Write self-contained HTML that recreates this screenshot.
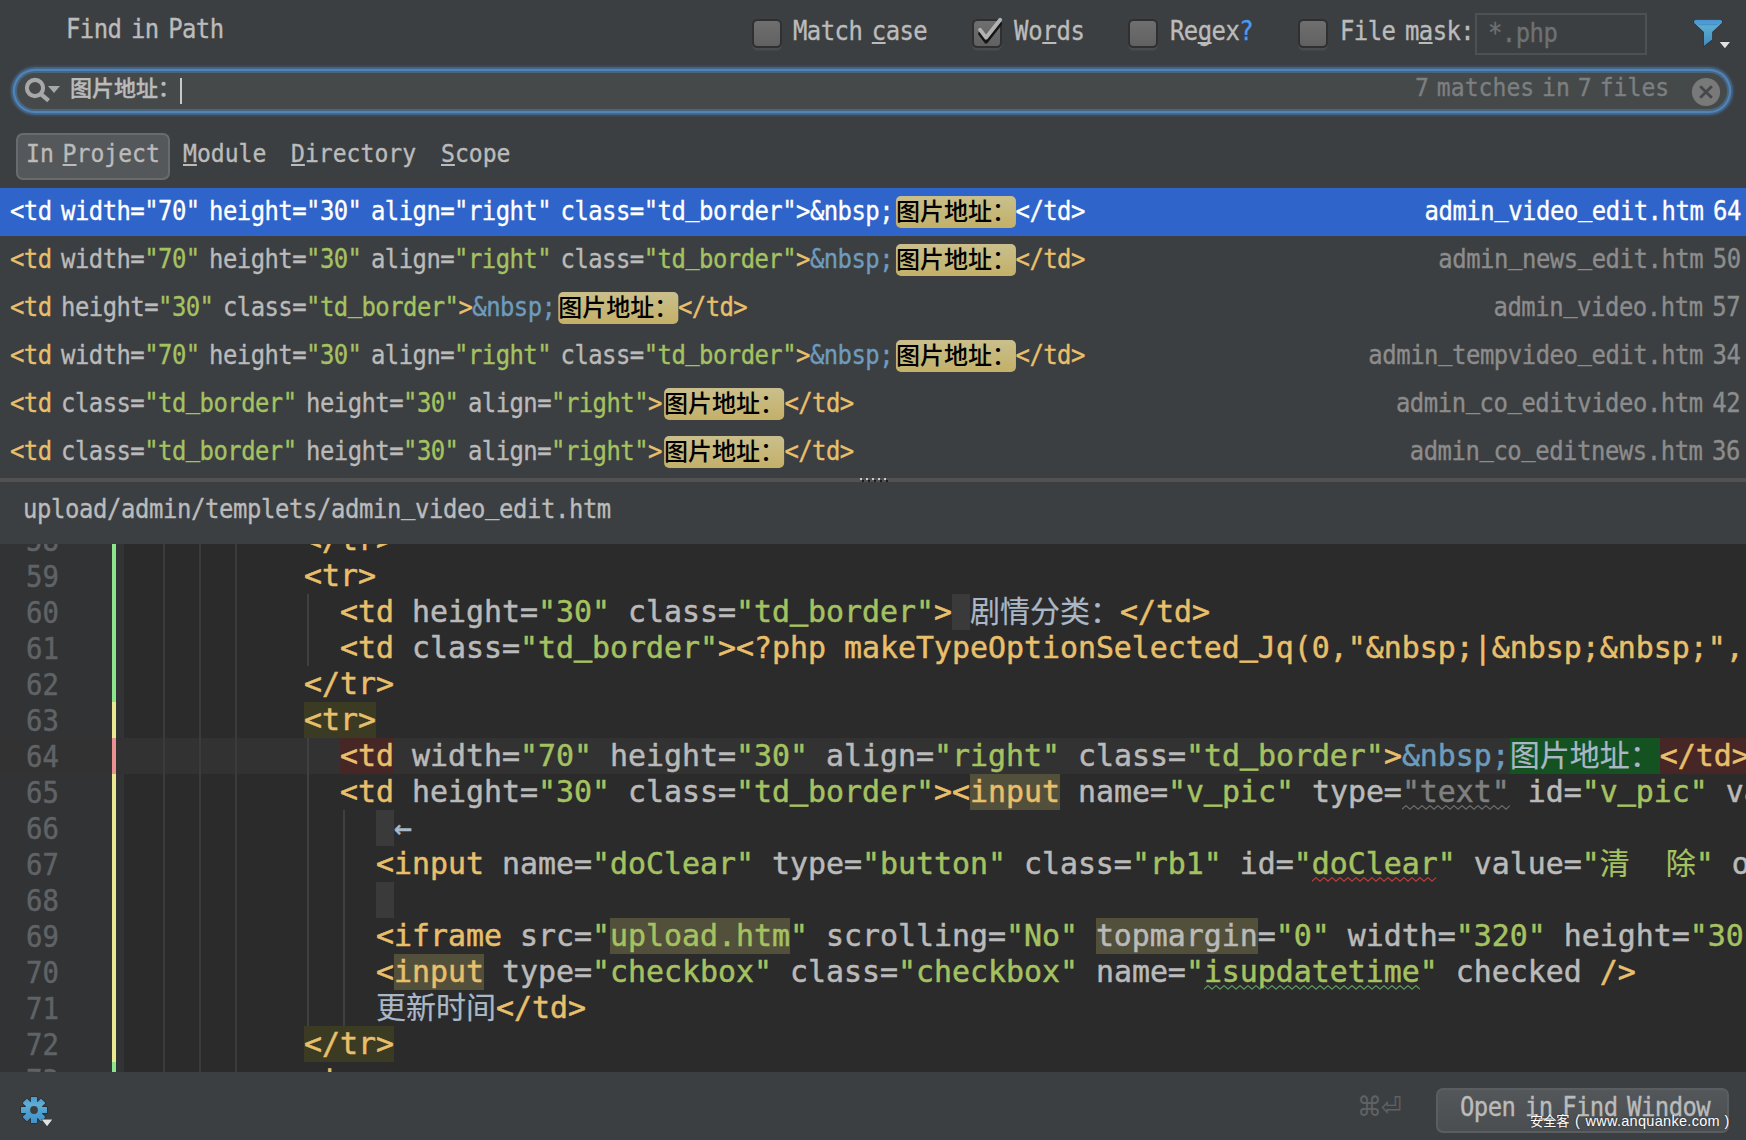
<!DOCTYPE html>
<html lang="zh">
<head>
<meta charset="utf-8">
<title>Find in Path</title>
<style>
html,body{margin:0;padding:0;}
body{width:1746px;height:1140px;overflow:hidden;position:relative;background:#3c3f41;
 font-family:"DejaVu Sans Mono","Liberation Mono","Noto Sans CJK SC",monospace;color:#bbbbbb;}
.abs{position:absolute;}
/* UI font */
.ui{position:absolute;white-space:pre;font-size:26px;letter-spacing:-0.6px;word-spacing:-4.7px;height:48px;line-height:48px;color:#bbbbbb;transform:scaleX(.92);transform-origin:0 0;-webkit-text-stroke:0.35px;}
.sm{font-size:24px;letter-spacing:0;word-spacing:-5.3px;transform:scaleX(.962);}
.cj{letter-spacing:0;word-spacing:0;font-family:"Liberation Sans","Noto Sans CJK SC",sans-serif;}
u{text-decoration:underline;text-decoration-thickness:2px;text-underline-offset:2px;text-decoration-skip-ink:none;}
/* checkboxes */
.cb{position:absolute;top:19px;width:25.5px;height:24.5px;border:2px solid #2e3032;border-radius:5.5px;
 background:linear-gradient(#6f6f6f,#616161);box-shadow:0 2.5px 0 0 #494c4e;}
/* search field */
#sf{position:absolute;left:17.4px;top:73px;width:1710px;height:36px;border-radius:18px;background:#45494a;
 box-shadow:0 0 0 2px #48657f,0 0 0 4.2px #4f84ba,0 0 0 6px #45607d,0 0 2px 7.2px rgba(62,84,110,.7);}
/* list */
.row{position:absolute;left:0;width:1746px;height:48px;}
.row .l{left:9.6px;top:-1.1px;}
.row .r{right:5.5px;top:-1.1px;color:#8c8c8c;transform-origin:100% 0;letter-spacing:-0.5px;}
.tg{color:#e8bf6a}.at{color:#bababa}.st{color:#a5c261}.en{color:#6d9cbe}
.hl{display:inline-block;width:130.43px;height:32px;line-height:32px;vertical-align:baseline;letter-spacing:0;word-spacing:0;-webkit-text-stroke:0;}
.hi{display:block;position:relative;top:0px;width:120px;height:32px;line-height:32px;transform:scaleX(1.08696);transform-origin:0 0;font-size:24px;color:#000;
 font-family:"Liberation Sans","Noto Sans CJK SC",sans-serif;font-weight:500;}
.hi::before{content:"";position:absolute;left:0;top:0.2px;width:120px;height:32.3px;border-radius:5px;background:linear-gradient(#cabf8c,#c3b068);z-index:-1;}
.us{font-style:normal;position:relative;top:-4px;}
.sel{background:#2f65ca;}
.sel .ui,.sel .ui span{color:#fff;}
.sel .ui span.hi{color:#000;}
/* editor */
#ed{position:absolute;left:0;top:544px;width:1746px;height:528px;background:#2b2b2b;overflow:hidden;}
#gut{position:absolute;left:0;top:0;width:124px;height:528px;background:#313335;}
.ln{position:absolute;left:26px;height:36px;line-height:36px;font-size:30.5px;color:#606366;white-space:pre;transform:scaleX(.895);transform-origin:0 0;-webkit-text-stroke:0.5px;margin-top:.7px;}
.cl{position:absolute;height:36px;line-height:36px;font-size:29.9px;white-space:pre;color:#a9b7c6;-webkit-text-stroke:0.5px;}
.g{position:absolute;width:2px;background:#3b3b3b;}
.cjk{font-family:"Liberation Mono","Noto Sans CJK SC",monospace;font-size:30px;line-height:0;-webkit-text-stroke:0.2px;}
.u2{position:relative;top:-3px;-webkit-text-stroke:.95px;}
.wg{color:#808080;}
.wr{color:#a5c261;}
.wn{color:#a5c261;}
</style>
</head>
<body>

<!-- title + options -->
<div class="ui" style="left:66px;top:5px;">Find in Path</div>

<div class="cb" style="left:752px;"></div>
<div class="ui" style="left:793px;top:7px;">Match <u>c</u>ase</div>
<div class="cb" style="left:972px;"></div>
<svg class="abs" style="left:972px;top:14px" width="34" height="34" viewBox="0 0 34 34"><path d="M8 19.7 L14 27.7 L28.2 9.7" fill="none" stroke="#151515" stroke-width="3.8" stroke-linecap="round" stroke-linejoin="round"/><path d="M8 15.7 L14 23.7 L28.2 5.7" fill="none" stroke="#b2b2b2" stroke-width="3.8" stroke-linecap="round" stroke-linejoin="round"/></svg>
<div class="ui" style="left:1014px;top:7px;letter-spacing:-0.3px;">Wo<u>r</u>ds</div>
<div class="cb" style="left:1128px;"></div>
<div class="ui" style="left:1170px;top:7px;">Re<u>g</u>ex<span style="color:#4a9bf0">?</span></div>
<div class="cb" style="left:1298px;"></div>
<div class="ui" style="left:1340px;top:7px;">File m<u>a</u>sk:</div>
<div class="abs" style="left:1475px;top:13px;width:168px;height:38px;border:2px solid #4e5052;background:#3c3f41;"></div>
<div class="ui" style="left:1488px;top:9.1px;color:#6e7173;">*.php</div>
<svg class="abs" style="left:1692px;top:18px" width="44" height="36" viewBox="0 0 44 36"><defs><linearGradient id="fg" x1="0" y1="0" x2="0" y2="1"><stop offset="0" stop-color="#4693d2"/><stop offset=".28" stop-color="#5cabd0"/><stop offset="1" stop-color="#3f8bc2"/></linearGradient></defs><path d="M4 1.8 H28.1 a2 2 0 0 1 2 2 c0 1 -.5 1.6 -1 2 L20.2 13.9 V21.6 L11.9 27.9 V13.9 L3 5.8 c-.5 -.4 -1 -1 -1 -2 a2 2 0 0 1 2 -2 Z" fill="url(#fg)" stroke="#2c2e30" stroke-width="1.2" paint-order="stroke"/><path d="M6.5 6.3 H25.7" stroke="#3f89bf" stroke-width="0.8"/><path d="M27.7 24 H38 L32.9 30.2 Z" fill="#e2e2e2" stroke="#2c2e30" stroke-width="1" paint-order="stroke"/></svg>

<!-- search field -->
<div id="sf"></div>
<svg class="abs" style="left:22px;top:74px" width="42" height="32" viewBox="0 0 42 32"><circle cx="13" cy="14" r="8.1" fill="none" stroke="#a8a8a8" stroke-width="4.1"/><path d="M18.6 19.8 L26.6 26.6" stroke="#a8a8a8" stroke-width="4.2"/><path d="M26 12 H38 L32 19 Z" fill="#a8a8a8"/></svg>
<div class="ui cj" style="left:70px;top:64.7px;font-size:22px;transform:none;font-weight:500;">图片地址：</div>
<div class="abs" style="left:180px;top:78px;width:2px;height:26px;background:#c8c8c8;"></div>
<div class="ui sm" style="right:77px;top:63.6px;color:#7c7f81;transform-origin:100% 0;word-spacing:-6.2px;">7 matches in 7 files</div>
<svg class="abs" style="left:1691px;top:77px" width="30" height="30" viewBox="0 0 30 30"><circle cx="15" cy="15" r="14.1" fill="#797979"/><path d="M9.2 9.2 L20.8 20.8 M20.8 9.2 L9.2 20.8" stroke="#44484a" stroke-width="2.8"/></svg>

<!-- scope tabs -->
<div class="abs" style="left:16px;top:133px;width:150px;height:43px;border:2px solid #696c6e;border-radius:7px;background:#54585a;"></div>
<div class="ui sm" style="left:25.8px;top:129.7px;">In <u>P</u>roject</div>
<div class="ui sm" style="left:183px;top:129.7px;"><u>M</u>odule</div>
<div class="ui sm" style="left:291px;top:129.7px;"><u>D</u>irectory</div>
<div class="ui sm" style="left:441px;top:129.7px;"><u>S</u>cope</div>

<!-- result list -->
<div class="row sel" style="top:188px;"><div class="ui l"><span class="tg">&lt;td</span> <span class="at">width=</span><span class="st">"70"</span> <span class="at">height=</span><span class="st">"30"</span> <span class="at">align=</span><span class="st">"right"</span> <span class="at">class=</span><span class="st">"td<i class="us">_</i>border"</span><span class="tg">&gt;</span><span class="en">&amp;nbsp;</span><span style="display:inline-block;width:2.8px"></span><span class="hl"><span class="hi">图片地址：</span></span><span class="tg">&lt;/td&gt;</span></div><div class="ui r">admin<i class="us">_</i>video<i class="us">_</i>edit.htm 64</div></div>
<div class="row" style="top:236px;"><div class="ui l"><span class="tg">&lt;td</span> <span class="at">width=</span><span class="st">"70"</span> <span class="at">height=</span><span class="st">"30"</span> <span class="at">align=</span><span class="st">"right"</span> <span class="at">class=</span><span class="st">"td<i class="us">_</i>border"</span><span class="tg">&gt;</span><span class="en">&amp;nbsp;</span><span style="display:inline-block;width:2.8px"></span><span class="hl"><span class="hi">图片地址：</span></span><span class="tg">&lt;/td&gt;</span></div><div class="ui r">admin<i class="us">_</i>news<i class="us">_</i>edit.htm 50</div></div>
<div class="row" style="top:284px;"><div class="ui l"><span class="tg">&lt;td</span> <span class="at">height=</span><span class="st">"30"</span> <span class="at">class=</span><span class="st">"td<i class="us">_</i>border"</span><span class="tg">&gt;</span><span class="en">&amp;nbsp;</span><span style="display:inline-block;width:2.8px"></span><span class="hl"><span class="hi">图片地址：</span></span><span class="tg">&lt;/td&gt;</span></div><div class="ui r">admin<i class="us">_</i>video.htm 57</div></div>
<div class="row" style="top:332px;"><div class="ui l"><span class="tg">&lt;td</span> <span class="at">width=</span><span class="st">"70"</span> <span class="at">height=</span><span class="st">"30"</span> <span class="at">align=</span><span class="st">"right"</span> <span class="at">class=</span><span class="st">"td<i class="us">_</i>border"</span><span class="tg">&gt;</span><span class="en">&amp;nbsp;</span><span style="display:inline-block;width:2.8px"></span><span class="hl"><span class="hi">图片地址：</span></span><span class="tg">&lt;/td&gt;</span></div><div class="ui r">admin<i class="us">_</i>tempvideo<i class="us">_</i>edit.htm 34</div></div>
<div class="row" style="top:380px;"><div class="ui l"><span class="tg">&lt;td</span> <span class="at">class=</span><span class="st">"td<i class="us">_</i>border"</span> <span class="at">height=</span><span class="st">"30"</span> <span class="at">align=</span><span class="st">"right"</span><span class="tg">&gt;</span><span style="display:inline-block;width:2.8px"></span><span class="hl"><span class="hi">图片地址：</span></span><span class="tg">&lt;/td&gt;</span></div><div class="ui r">admin<i class="us">_</i>co<i class="us">_</i>editvideo.htm 42</div></div>
<div class="row" style="top:428px;"><div class="ui l"><span class="tg">&lt;td</span> <span class="at">class=</span><span class="st">"td<i class="us">_</i>border"</span> <span class="at">height=</span><span class="st">"30"</span> <span class="at">align=</span><span class="st">"right"</span><span class="tg">&gt;</span><span style="display:inline-block;width:2.8px"></span><span class="hl"><span class="hi">图片地址：</span></span><span class="tg">&lt;/td&gt;</span></div><div class="ui r">admin<i class="us">_</i>co<i class="us">_</i>editnews.htm 36</div></div>

<!-- splitter + path -->
<div class="abs" style="left:0;top:478px;width:1746px;height:4px;background:#525252;"></div>
<svg class="abs" style="left:860px;top:478px" width="30" height="4" viewBox="0 0 30 4" shape-rendering="crispEdges"><rect x="0" y="0" width="2" height="2" fill="#c9c9c9"/><rect x="2" y="2" width="2" height="2" fill="#1b1b1b"/><rect x="6" y="0" width="2" height="2" fill="#c9c9c9"/><rect x="8" y="2" width="2" height="2" fill="#1b1b1b"/><rect x="12" y="0" width="2" height="2" fill="#c9c9c9"/><rect x="14" y="2" width="2" height="2" fill="#1b1b1b"/><rect x="18" y="0" width="2" height="2" fill="#c9c9c9"/><rect x="20" y="2" width="2" height="2" fill="#1b1b1b"/><rect x="24" y="0" width="2" height="2" fill="#c9c9c9"/><rect x="26" y="2" width="2" height="2" fill="#1b1b1b"/></svg>
<div class="ui" style="left:23px;top:485px;letter-spacing:-0.44px;">upload/admin/templets/admin<i class="us">_</i>video<i class="us">_</i>edit.htm</div>

<!-- editor -->
<div id="ed">
<div id="gut"></div>
<div class="abs" style="left:124px;top:194px;width:1622px;height:36px;background:#323232;"></div>
<div class="abs" style="left:0;top:194px;width:124px;height:36px;background:#323232;"></div>
<div class="abs" style="left:112px;top:0px;width:4px;height:158px;background:#8ce48c;"></div>
<div class="abs" style="left:112px;top:158px;width:4px;height:36px;background:#ebe98f;"></div>
<div class="abs" style="left:112px;top:194px;width:4px;height:36px;background:#ea9192;"></div>
<div class="abs" style="left:112px;top:230px;width:4px;height:288px;background:#ebe98f;"></div>
<div class="abs" style="left:112px;top:518px;width:4px;height:10px;background:#8ce48c;"></div>
<div class="g" style="left:163px;top:0;height:528px;"></div>
<div class="g" style="left:199px;top:0;height:528px;"></div>
<div class="g" style="left:235px;top:0;height:528px;"></div>
<div class="g" style="left:307px;top:50px;height:72px;background:#404040;"></div>
<div class="g" style="left:307px;top:194px;height:288px;background:#404040;"></div>
<div class="g" style="left:343px;top:266px;height:216px;background:#404040;"></div>
<div class="ln" style="top:-22px;">58</div>
<div class="ln" style="top:14px;">59</div>
<div class="ln" style="top:50px;">60</div>
<div class="ln" style="top:86px;">61</div>
<div class="ln" style="top:122px;">62</div>
<div class="ln" style="top:158px;">63</div>
<div class="ln" style="top:194px;">64</div>
<div class="ln" style="top:230px;">65</div>
<div class="ln" style="top:266px;">66</div>
<div class="ln" style="top:302px;">67</div>
<div class="ln" style="top:338px;">68</div>
<div class="ln" style="top:374px;">69</div>
<div class="ln" style="top:410px;">70</div>
<div class="ln" style="top:446px;">71</div>
<div class="ln" style="top:482px;">72</div>
<div class="ln" style="top:518px;">73</div>
<div class="ln" style="top:554px;">74</div>
<div class="abs" style="left:304px;top:158px;width:72px;height:36px;background:#3b3b24;"></div>
<div class="abs" style="left:304px;top:482px;width:90px;height:36px;background:#3b3b24;"></div>
<div class="abs" style="left:340px;top:194px;width:54px;height:36px;background:#472626;"></div>
<div class="abs" style="left:1510px;top:194px;width:150.12px;height:36px;background:#155221;"></div>
<div class="abs" style="left:1660.1200000000001px;top:194px;width:108px;height:36px;background:#472626;"></div>
<div class="abs" style="left:952px;top:50px;width:18px;height:36px;background:#3a3a3a;"></div>
<div class="abs" style="left:376px;top:266px;width:18px;height:36px;background:#3a3a3a;"></div>
<div class="abs" style="left:376px;top:338px;width:18px;height:36px;background:#3a3a3a;"></div>
<div class="abs" style="left:970px;top:230px;width:90px;height:36px;background:#52503a;"></div>
<div class="abs" style="left:394px;top:410px;width:90px;height:36px;background:#52503a;"></div>
<div class="abs" style="left:610px;top:374px;width:180px;height:36px;background:#52503a;"></div>
<div class="abs" style="left:1096px;top:374px;width:162px;height:36px;background:#52503a;"></div>
<svg class="abs" style="left:1402px;top:261px" width="108" height="5" viewBox="0 0 108 5"><polyline points="0,4.2 4,0.6 8,4.2 12,0.6 16,4.2 20,0.6 24,4.2 28,0.6 32,4.2 36,0.6 40,4.2 44,0.6 48,4.2 52,0.6 56,4.2 60,0.6 64,4.2 68,0.6 72,4.2 76,0.6 80,4.2 84,0.6 88,4.2 92,0.6 96,4.2 100,0.6 104,4.2 108,0.6" fill="none" stroke="#6f6f6f" stroke-width="1.15"/></svg>
<svg class="abs" style="left:1312px;top:333px" width="126" height="5" viewBox="0 0 126 5"><polyline points="0,4.2 4,0.6 8,4.2 12,0.6 16,4.2 20,0.6 24,4.2 28,0.6 32,4.2 36,0.6 40,4.2 44,0.6 48,4.2 52,0.6 56,4.2 60,0.6 64,4.2 68,0.6 72,4.2 76,0.6 80,4.2 84,0.6 88,4.2 92,0.6 96,4.2 100,0.6 104,4.2 108,0.6 112,4.2 116,0.6 120,4.2 124,0.6" fill="none" stroke="#bc3f3c" stroke-width="1.15"/></svg>
<svg class="abs" style="left:1204px;top:441px" width="216" height="5" viewBox="0 0 216 5"><polyline points="0,4.2 4,0.6 8,4.2 12,0.6 16,4.2 20,0.6 24,4.2 28,0.6 32,4.2 36,0.6 40,4.2 44,0.6 48,4.2 52,0.6 56,4.2 60,0.6 64,4.2 68,0.6 72,4.2 76,0.6 80,4.2 84,0.6 88,4.2 92,0.6 96,4.2 100,0.6 104,4.2 108,0.6 112,4.2 116,0.6 120,4.2 124,0.6 128,4.2 132,0.6 136,4.2 140,0.6 144,4.2 148,0.6 152,4.2 156,0.6 160,4.2 164,0.6 168,4.2 172,0.6 176,4.2 180,0.6 184,4.2 188,0.6 192,4.2 196,0.6 200,4.2 204,0.6 208,4.2 212,0.6 216,4.2" fill="none" stroke="#5f9a62" stroke-width="1.15"/></svg>
<div class="cl" style="left:304px;top:-22px;"><span class="tg">&lt;/tr&gt;</span></div>
<div class="cl" style="left:304px;top:14px;"><span class="tg">&lt;tr&gt;</span></div>
<div class="cl" style="left:340px;top:50px;"><span class="tg">&lt;td</span> <span class="at">height=</span><span class="st">"30"</span> <span class="at">class=</span><span class="st">"td<span class="u2">_</span>border"</span><span class="tg">&gt;</span> <span class="cjk">剧情分类：</span><span class="tg">&lt;/td&gt;</span></div>
<div class="cl" style="left:340px;top:86px;"><span class="tg">&lt;td</span> <span class="at">class=</span><span class="st">"td<span class="u2">_</span>border"</span><span class="tg">&gt;&lt;?php makeTypeOptionSelected<span class="u2">_</span>Jq(0,"&amp;nbsp;|&amp;nbsp;&amp;nbsp;",</span></div>
<div class="cl" style="left:304px;top:122px;"><span class="tg">&lt;/tr&gt;</span></div>
<div class="cl" style="left:304px;top:158px;"><span class="tg">&lt;tr&gt;</span></div>
<div class="cl" style="left:340px;top:194px;"><span class="tg">&lt;td</span> <span class="at">width=</span><span class="st">"70"</span> <span class="at">height=</span><span class="st">"30"</span> <span class="at">align=</span><span class="st">"right"</span> <span class="at">class=</span><span class="st">"td<span class="u2">_</span>border"</span><span class="tg">&gt;</span><span class="en">&amp;nbsp;</span><span class="cjk">图片地址：</span><span class="tg">&lt;/td&gt;</span></div>
<div class="cl" style="left:340px;top:230px;"><span class="tg">&lt;td</span> <span class="at">height=</span><span class="st">"30"</span> <span class="at">class=</span><span class="st">"td<span class="u2">_</span>border"</span><span class="tg">&gt;&lt;input</span> <span class="at">name=</span><span class="st">"v<span class="u2">_</span>pic"</span> <span class="at">type=</span><span class="wg">"text"</span> <span class="at">id=</span><span class="st">"v<span class="u2">_</span>pic"</span> <span class="at">value=</span></div>
<div class="cl" style="left:394px;top:266px;">←</div>
<div class="cl" style="left:376px;top:302px;"><span class="tg">&lt;input</span> <span class="at">name=</span><span class="st">"doClear"</span> <span class="at">type=</span><span class="st">"button"</span> <span class="at">class=</span><span class="st">"rb1"</span> <span class="at">id=</span><span class="st">"</span><span class="wr">doClear</span><span class="st">"</span> <span class="at">value=</span><span class="st">"</span><span class="cjk st">清</span>  <span class="cjk st">除</span><span class="st">"</span> <span class="at">onclick=</span></div>
<div class="cl" style="left:376px;top:374px;"><span class="tg">&lt;iframe</span> <span class="at">src=</span><span class="st">"upload.htm"</span> <span class="at">scrolling=</span><span class="st">"No"</span> <span class="at">topmargin=</span><span class="st">"0"</span> <span class="at">width=</span><span class="st">"320"</span> <span class="at">height=</span><span class="st">"30"</span></div>
<div class="cl" style="left:376px;top:410px;"><span class="tg">&lt;input</span> <span class="at">type=</span><span class="st">"checkbox"</span> <span class="at">class=</span><span class="st">"checkbox"</span> <span class="at">name=</span><span class="st">"</span><span class="wn">isupdatetime</span><span class="st">"</span> <span class="at">checked</span> <span class="tg">/&gt;</span></div>
<div class="cl" style="left:376px;top:446px;"><span class="cjk">更新时间</span><span class="tg">&lt;/td&gt;</span></div>
<div class="cl" style="left:304px;top:482px;"><span class="tg">&lt;/tr&gt;</span></div>
<div class="cl" style="left:304px;top:518px;"><span class="tg">&lt;tr&gt;</span></div>
</div>

<!-- bottom bar -->
<div class="abs" style="left:0;top:1072px;width:1746px;height:68px;background:#3c3f41;"></div>
<svg class="abs" style="left:18px;top:1094px" width="40" height="38" viewBox="0 0 40 38"><defs><linearGradient id="gg" gradientUnits="userSpaceOnUse" x1="0" y1="-13" x2="0" y2="13"><stop offset="0" stop-color="#479ad6"/><stop offset=".3" stop-color="#60aed3"/><stop offset=".6" stop-color="#4d9fd0"/><stop offset="1" stop-color="#4491c7"/></linearGradient><clipPath id="gc"><rect x="-3.1" y="-13" width="6.2" height="26" rx=".6" transform="rotate(0)"/><rect x="-3.1" y="-13" width="6.2" height="26" rx=".6" transform="rotate(45)"/><rect x="-3.1" y="-13" width="6.2" height="26" rx=".6" transform="rotate(90)"/><rect x="-3.1" y="-13" width="6.2" height="26" rx=".6" transform="rotate(135)"/><circle r="8.8"/></clipPath></defs><g transform="translate(16,16)"><g fill="#2c2e30" stroke="#2c2e30" stroke-width="1.6"><rect x="-3.1" y="-13" width="6.2" height="26" rx=".6" transform="rotate(0)"/><rect x="-3.1" y="-13" width="6.2" height="26" rx=".6" transform="rotate(45)"/><rect x="-3.1" y="-13" width="6.2" height="26" rx=".6" transform="rotate(90)"/><rect x="-3.1" y="-13" width="6.2" height="26" rx=".6" transform="rotate(135)"/><circle r="8.8"/></g><rect x="-14" y="-14" width="28" height="28" fill="url(#gg)" clip-path="url(#gc)"/><circle r="3.9" fill="#3c3f41"/></g><path d="M23.8 25.6 H34.3 L29.05 32.3 Z" fill="#e2e2e2" stroke="#2c2e30" stroke-width="1" paint-order="stroke"/></svg>
<div class="ui" style="left:1357px;top:1083px;color:#5f6264;letter-spacing:-1px;font-size:27px;font-family:'DejaVu Sans',sans-serif;-webkit-text-stroke:0;">⌘⏎</div>
<div class="abs" style="left:1436px;top:1088px;width:289px;height:41px;border:2px solid #5b5e60;border-radius:7px;background:linear-gradient(#53575a,#4a4e50);"></div>
<div class="ui" style="left:1459.5px;top:1083.3px;">Open i<u>n</u> Find Window</div>
<div class="abs" style="left:1530px;top:1111px;height:20px;line-height:20px;font-size:14.5px;color:#fff;white-space:pre;font-family:'Liberation Sans','Noto Sans CJK SC',sans-serif;text-shadow:0 0 2px rgba(0,0,0,.55);"><span style="font-size:13.2px">安全客</span><span style="margin-left:5.5px">(</span><span style="margin-left:5.5px;letter-spacing:.3px">www.anquanke.com</span><span style="margin-left:4.5px">)</span></div>
</body>
</html>
